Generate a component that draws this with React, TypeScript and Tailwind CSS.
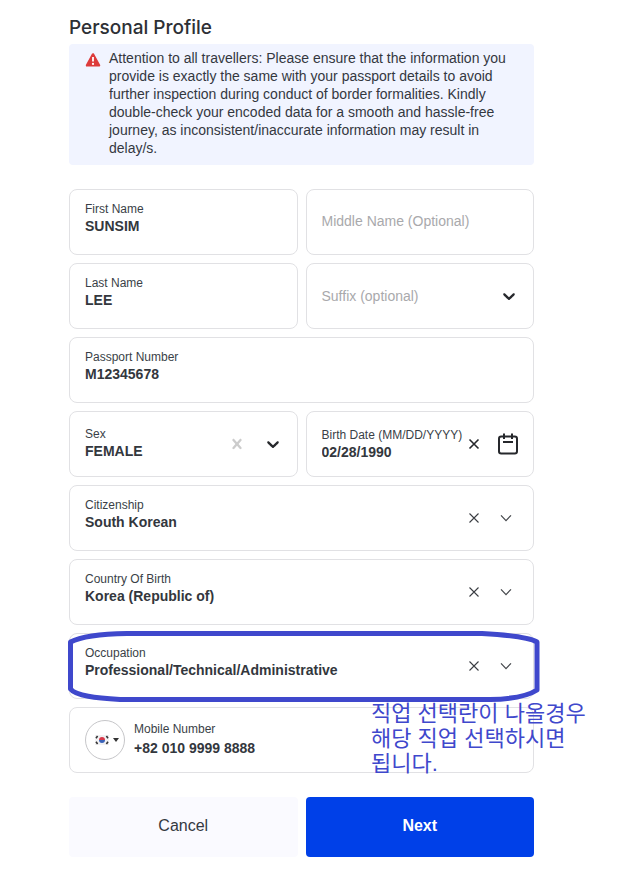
import { useState } from "react";
import type { ReactNode } from "react";

type IconProps = { className?: string };

const BoldChevron = ({ className }: IconProps) => (
    <svg width="20" height="20" viewBox="0 0 20 20" fill="currentColor" aria-hidden="true" className={className}>
        <path d="M4.516 7.548c0.436-0.446 1.043-0.481 1.576 0l3.908 3.747 3.908-3.747c0.533-0.481 1.141-0.446 1.574 0 0.436 0.445 0.408 1.197 0 1.615-0.406 0.418-4.695 4.502-4.695 4.502-0.217 0.223-0.502 0.335-0.787 0.335s-0.57-0.112-0.789-0.335c0 0-4.287-4.084-4.695-4.502s-0.436-1.17 0-1.615z" />
    </svg>
);

const BoldCross = () => (
    <svg width="20" height="20" viewBox="0 0 20 20" fill="currentColor" aria-hidden="true">
        <path d="M14.348 14.849c-0.469 0.469-1.229 0.469-1.697 0l-2.651-3.030-2.651 3.029c-0.469 0.469-1.229 0.469-1.697 0-0.469-0.469-0.469-1.229 0-1.697l2.758-3.15-2.759-3.152c-0.469-0.469-0.469-1.228 0-1.697s1.228-0.469 1.697 0l2.652 3.031 2.651-3.031c0.469-0.469 1.228-0.469 1.697 0s0.469 1.229 0 1.697l-2.758 3.152 2.758 3.15c0.469 0.469 0.469 1.229 0 1.698z" />
    </svg>
);

const ThinChevron = () => (
    <svg width="12" height="12" viewBox="0 0 12 12" fill="none" stroke="currentColor" strokeWidth="1.2" aria-hidden="true">
        <path d="M1 3.3 6 8.6 11 3.3" />
    </svg>
);

const ThinCross = ({ bold }: { bold?: boolean }) => (
    <svg width="12" height="12" viewBox="0 0 12 12" fill="none" stroke="currentColor" strokeWidth={bold ? 1.6 : 1.1} aria-hidden="true">
        <path d="M1.5 1.5 10.5 10.5M10.5 1.5 1.5 10.5" />
    </svg>
);

const CalendarIcon = () => (
    <svg width="20" height="22" viewBox="0 0 20 22" fill="none" stroke="currentColor" strokeWidth="2" aria-hidden="true">
        <rect x="1" y="3.5" width="18" height="17" rx="2.2" />
        <path d="M6 0.5v5.5M14 0.5v5.5" />
        <path d="M5 9h10" />
    </svg>
);

const WarningIcon = () => (
    <svg width="16" height="14" viewBox="0 0 16 14" aria-hidden="true" className="shrink-0">
        <path d="M8 1.4 14 12.4H2Z" fill="#dd3b3b" stroke="#dd3b3b" strokeWidth="2.4" strokeLinejoin="round" />
        <path d="M8 4v4.6" stroke="#fff" strokeWidth="1.8" />
        <circle cx="8" cy="10.9" r="1.1" fill="#fff" />
    </svg>
);

const KoreaFlag = () => (
    <svg width="14" height="10" viewBox="0 0 14 10" aria-hidden="true" className="shrink-0">
        <rect width="14" height="10" fill="#f1f1f3" />
        <path d="M4 5a3 3 0 0 1 6 0z" fill="#d8394a" />
        <path d="M4 5a3 3 0 0 0 6 0z" fill="#3a62b8" />
        <path d="M1 3.2 2.6 1M11.4 1l1.6 2.2M1 6.8 2.6 9M11.4 9l1.6-2.2" stroke="#333" strokeWidth="1.6" />
    </svg>
);

const labelStyle = "block whitespace-nowrap text-[12px] leading-4 text-[#3a3f47]";
const valueStyle = "block w-full min-w-0 appearance-none bg-transparent p-0 text-[14px] leading-[18px] font-bold text-[#33373d] outline-none";

const Card = ({ className, children }: { className: string, children: ReactNode }) => (
    <div className={`flex min-h-[66px] rounded-lg border border-[#e1e1e4] bg-white pl-[15px] ${className}`}>
        {children}
    </div>
);

const TextField = ({ id, label, initial }: { id: string, label: string, initial: string }) => {
    const [value, setValue] = useState(initial);

    return (
        <Card className="pt-[11px] pr-4">
            <div className="min-w-0 flex-1">
                <label htmlFor={id} className={labelStyle}>{label}</label>
                <input id={id} value={value} onChange={(e) => setValue(e.target.value)} className={valueStyle} />
            </div>
        </Card>
    );
};

const SelectField = ({ id, label, initial }: { id: string, label: string, initial: string }) => {
    const [value, setValue] = useState(initial);

    return (
        <Card className="items-center pr-[11px]">
            <div className="min-w-0 flex-1 self-start pt-[11px]">
                <label htmlFor={id} className={labelStyle}>{label}</label>
                <select id={id} value={value} onChange={(e) => setValue(e.target.value)} className={valueStyle}>
                    <option value=""></option>
                    <option value={initial}>{initial}</option>
                </select>
            </div>
            <button type="button" aria-label={`Clear ${label}`} onClick={() => setValue("")} className="flex size-8 items-center justify-center text-[#3a3d42]">
                <ThinCross />
            </button>
            <span className="flex size-8 items-center justify-center text-[#44474b]">
                <ThinChevron />
            </span>
        </Card>
    );
};

const SexField = () => {
    const [sex, setSex] = useState("FEMALE");

    return (
        <Card className="items-center pr-[6px]">
            <div className="min-w-0 flex-1 pb-[2px]">
                <label htmlFor="sex" className={labelStyle}>Sex</label>
                <select id="sex" value={sex} onChange={(e) => setSex(e.target.value)} className={valueStyle}>
                    <option value=""></option>
                    <option>FEMALE</option>
                    <option>MALE</option>
                </select>
            </div>
            <button type="button" aria-label="Clear sex" onClick={() => setSex("")} className="flex size-9 items-center justify-center text-[#cccccc]">
                <BoldCross />
            </button>
            <span className="flex size-9 items-center justify-center text-[#26282c]">
                <BoldChevron />
            </span>
        </Card>
    );
};

const BirthDateField = () => {
    const [date, setDate] = useState("02/28/1990");

    return (
        <Card className="items-center pr-[9px]">
            <div className="min-w-0 flex-1">
                <label htmlFor="birth" className={labelStyle}>Birth Date (MM/DD/YYYY)</label>
                <input id="birth" value={date} onChange={(e) => setDate(e.target.value)} className={valueStyle} />
            </div>
            <button type="button" aria-label="Clear birth date" onClick={() => setDate("")} className="flex h-8 w-5 items-center justify-center text-[#26282c]">
                <ThinCross bold />
            </button>
            <button type="button" aria-label="Open calendar" className="ml-2 flex size-8 items-center justify-center text-[#26282c]">
                <CalendarIcon />
            </button>
        </Card>
    );
};

const OccupationMark = () => (
    <svg viewBox="0 0 475 74" preserveAspectRatio="none" fill="none" stroke="#3f48cc" strokeWidth="5" strokeLinejoin="round" aria-hidden="true" className="pointer-events-none absolute -top-1 -left-[3px] h-[74px] w-[calc(100%+10px)]">
        <path d="M4.500 13C14 8 34 5 61 4.500H416C443 6 464 9 471 13V61C462 67 446 70 424 70.500H54C30 69 10 67 4.500 60Z" />
    </svg>
);

const App = () => {
    const [suffix, setSuffix] = useState("");

    return (
        <main className="min-h-screen bg-white pt-4 pr-[105px] pb-5 pl-[69px] font-['Liberation_Sans','Noto_Sans_CJK_KR',sans-serif]">
            <h1 className="font-['Inter',sans-serif] text-[19px] leading-6 font-medium text-[#2d3035]">Personal Profile</h1>
            <div role="alert" className="mt-1 flex items-start gap-2 rounded-sm bg-[#f1f4ff] pt-[5px] pr-3 pb-2 pl-4">
                <span className="pt-1"><WarningIcon /></span>
                <p className="text-[14px] leading-[18px] text-[#34383f]">
                    Attention to all travellers: Please ensure that the information you provide is exactly the same with your passport details to avoid further inspection during conduct of border formalities. Kindly double-check your encoded data for a smooth and hassle-free journey, as inconsistent/inaccurate information may result in delay/s.
                </p>
            </div>

            <form className="mt-6" onSubmit={(e) => e.preventDefault()}>
                <div className="grid gap-2">
                    <div className="grid grid-cols-2 gap-2">
                        <TextField id="first" label="First Name" initial="SUNSIM" />
                        <Card className="items-center pr-4 pb-[2px]">
                            <input aria-label="Middle Name (Optional)" placeholder="Middle Name (Optional)" className="w-full min-w-0 text-[14px] leading-[18px] outline-none placeholder:text-[#a9a9ac]" />
                        </Card>
                        <TextField id="last" label="Last Name" initial="LEE" />
                        <Card className="items-center pr-[6px]">
                            <select aria-label="Suffix (optional)" value={suffix} onChange={(e) => setSuffix(e.target.value)} className="min-w-0 flex-1 appearance-none text-[14px] leading-[18px] text-[#a9a9ac] outline-none">
                                <option value="">Suffix (optional)</option>
                                <option>JR</option>
                                <option>SR</option>
                            </select>
                            <span className="flex size-9 items-center justify-center text-[#26282c]">
                                <BoldChevron />
                            </span>
                        </Card>
                    </div>
                    <TextField id="passport" label="Passport Number" initial="M12345678" />
                    <div className="grid grid-cols-2 gap-2">
                        <SexField />
                        <BirthDateField />
                    </div>
                    <SelectField id="citizenship" label="Citizenship" initial="South Korean" />
                    <SelectField id="country" label="Country Of Birth" initial="Korea (Republic of)" />
                    <div className="relative">
                        <SelectField id="occupation" label="Occupation" initial="Professional/Technical/Administrative" />
                        <OccupationMark />
                    </div>
                    <div className="relative">
                        <Card className="items-center gap-[9px] pr-4">
                            <button type="button" aria-label="Country code" className="flex size-10 shrink-0 items-center justify-center gap-1 rounded-full border border-[#c6c6c9] pl-1">
                                <KoreaFlag />
                                <svg width="6" height="4" viewBox="0 0 6 4" aria-hidden="true" className="shrink-0">
                                    <path d="M0 0h6L3 4z" fill="#333" />
                                </svg>
                            </button>
                            <div className="flex min-w-0 flex-1 flex-col gap-[2px] pb-[2px]">
                                <label htmlFor="mobile" className={labelStyle}>Mobile Number</label>
                                <input id="mobile" defaultValue="+82 010 9999 8888" className={valueStyle} />
                            </div>
                        </Card>
                        <p className="pointer-events-none absolute -top-[6px] left-[302px] text-[22px] leading-[25px] font-normal whitespace-nowrap text-[#3f48cc]">
                            직업 선택란이 나올경우<br />
                            해당 직업 선택하시면<br />
                            됩니다.
                        </p>
                    </div>
                </div>

                <div className="mt-6 grid grid-cols-2 gap-2">
                    <button type="button" className="rounded-sm bg-[#fafaff] pt-[17px] pb-[19px] text-[16px] leading-6 text-[#34383f]">Cancel</button>
                    <button type="submit" className="rounded-sm bg-[#0040e8] pt-[17px] pb-[19px] text-[16px] leading-6 font-bold text-white">Next</button>
                </div>
            </form>
        </main>
    );
};

export default App;
